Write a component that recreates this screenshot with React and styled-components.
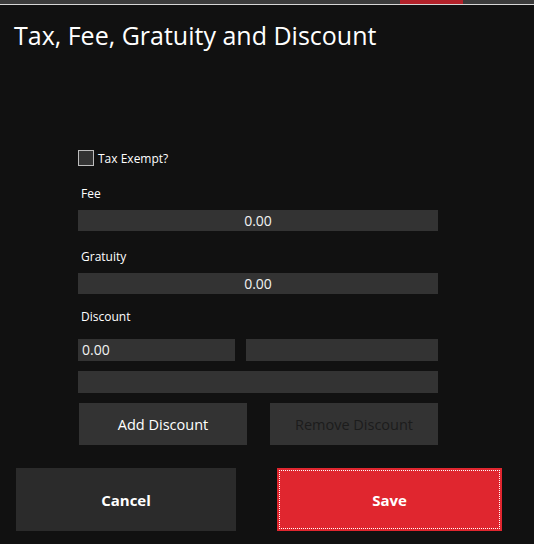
import React, { useState } from "react";
import styled, { createGlobalStyle } from "styled-components";

const GlobalStyle = createGlobalStyle`
  html, body {
    margin: 0;
    padding: 0;
    background: #111111;
  }
  * {
    box-sizing: border-box;
  }
`;

const Page = styled.div`
  width: 534px;
  height: 544px;
  background: #111111;
  font-family: "Open Sans", "Noto Sans", sans-serif;
  color: #ffffff;
  display: flex;
  flex-direction: column;
  overflow: hidden;
`;

const TopStrip = styled.div`
  height: 5px;
  background: #3b3b3b;
  display: flex;
  border-bottom: 1px solid #d6d6d6;
`;

const StripAccent = styled.div`
  margin-left: 400px;
  width: 63px;
  height: 4px;
  background: #b3222a;
`;

const Title = styled.h1`
  margin: 14px 0 0 14px;
  font-size: 25px;
  font-weight: 400;
  line-height: 32px;
`;

const Form = styled.div`
  margin: 99px 0 0 78px;
  width: 360px;
  display: flex;
  flex-direction: column;
`;

const CheckRow = styled.label`
  display: flex;
  align-items: center;
  gap: 4px;
  font-size: 12px;
  height: 16px;
`;

const Box = styled.span`
  width: 16px;
  height: 16px;
  border: 1px solid #bdbdbd;
  background: ${(p) => (p.checked ? "#e0262f" : "#333333")};
`;

const Label = styled.div`
  padding-left: 3px;
  font-size: 12px;
  line-height: 17px;
  margin-top: ${(p) => p.top}px;
  margin-bottom: ${(p) => p.bottom}px;
`;

const Field = styled.div`
  height: ${(p) => p.h || 21}px;
  width: ${(p) => (p.w ? `${p.w}px` : "100%")};
  background: #333333;
  font-size: 14px;
  line-height: ${(p) => p.h || 21}px;
  text-align: ${(p) => p.align || "center"};
  padding: 0 4px;
  color: #f2f2f2;
`;

const Row = styled.div`
  display: flex;
  justify-content: space-between;
  margin-top: ${(p) => p.top || 0}px;
  padding-left: ${(p) => p.inset || 0}px;
`;

const SmallButton = styled.button`
  width: 168px;
  height: 42px;
  border: none;
  background: #333333;
  color: ${(p) => (p.disabled ? "#1c1c1c" : "#ffffff")};
  font-family: inherit;
  font-size: 14.5px;
  padding: 0;
`;

const Footer = styled.div`
  display: flex;
  margin-top: 23px;
  padding-left: 16px;
`;

const BigButton = styled.button`
  width: ${(p) => p.w}px;
  height: 63px;
  margin-left: ${(p) => p.gap || 0}px;
  border: none;
  background: ${(p) => (p.primary ? "#e0262f" : "#2b2b2b")};
  color: #ffffff;
  font-family: inherit;
  font-weight: 700;
  font-size: 15px;
  outline: ${(p) => (p.primary ? "1px dotted #ffffff" : "none")};
  outline-offset: -3px;
`;

export default function App() {
  const [exempt, setExempt] = useState(false);
  return (
    <Page>
      <GlobalStyle />
      <TopStrip>
        <StripAccent />
      </TopStrip>
      <Title>Tax, Fee, Gratuity and Discount</Title>
      <Form>
        <CheckRow onClick={() => setExempt(!exempt)}>
          <Box checked={exempt} />
          Tax Exempt?
        </CheckRow>
        <Label top={19} bottom={8}>Fee</Label>
        <Field>0.00</Field>
        <Label top={17} bottom={8}>Gratuity</Label>
        <Field>0.00</Field>
        <Label top={14} bottom={14}>Discount</Label>
        <Row>
          <Field w={157} h={22} align="left">0.00</Field>
          <Field w={192} h={22} />
        </Row>
        <Row top={10}>
          <Field h={22} />
        </Row>
        <Row top={10} inset={1}>
          <SmallButton>Add Discount</SmallButton>
          <SmallButton disabled>Remove Discount</SmallButton>
        </Row>
      </Form>
      <Footer>
        <BigButton w={220}>Cancel</BigButton>
        <BigButton w={225} gap={41} primary>
          Save
        </BigButton>
      </Footer>
    </Page>
  );
}
